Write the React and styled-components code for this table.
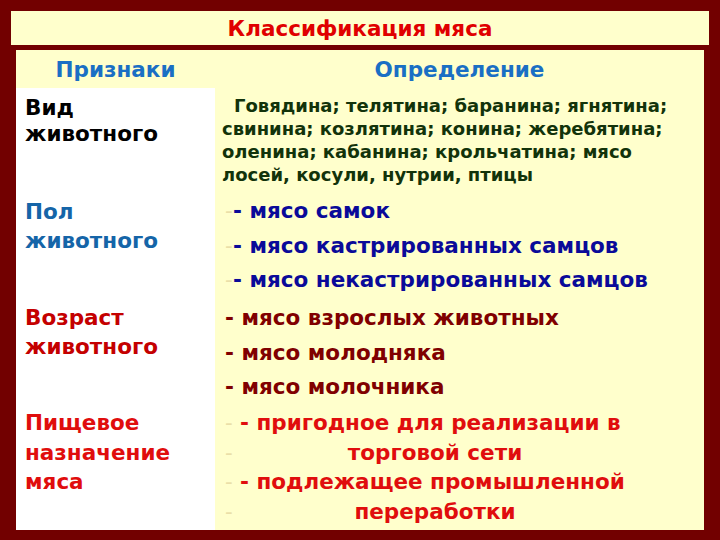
import React from "react";
import styled, { createGlobalStyle } from "styled-components";

const Global = createGlobalStyle`
  html, body { margin: 0; padding: 0; }
  body {
    width: 720px;
    height: 540px;
    overflow: hidden;
    background: #720000;
    font-family: "DejaVu Sans", Verdana, sans-serif;
    font-weight: bold;
  }
`;

const Page = styled.div`
  width: 720px;
  height: 540px;
  box-sizing: border-box;
  padding: 11px 11px 0 11px;
  display: flex;
  flex-direction: column;
  gap: 5px;
`;

const TitleBar = styled.div`
  height: 34px;
  background: #ffffcc;
  display: flex;
  align-items: center;
  justify-content: center;
  color: #e00000;
  font-size: 21.5px;
`;

const Table = styled.div`
  margin: 0 5px;
  display: grid;
  grid-template-columns: 199px 1fr;
  grid-template-rows: 38px 105px 107px 105px 125px;
`;

const HeadCell = styled.div`
  background: #ffffcc;
  color: #1a6fc4;
  font-size: 21.5px;
  display: flex;
  align-items: center;
  justify-content: center;
  padding-left: ${(p) => p.$shift || 0}px;
`;

const LeftCell = styled.div`
  background: #ffffff;
  color: ${(p) => p.$color};
  font-size: 21.5px;
  line-height: ${(p) => p.$lh}px;
  padding: ${(p) => p.$top}px 0 0 9px;
`;

const RightCell = styled.div`
  background: #ffffcc;
  color: ${(p) => p.$color};
  font-size: ${(p) => p.$size}px;
  line-height: ${(p) => p.$lh}px;
  padding: ${(p) => p.$top}px 0 0 ${(p) => p.$left || 10}px;
`;

const Para = styled.div`
  text-indent: 12px;
  padding-right: 14px;
`;

const Line = styled.div`
  display: flex;
  white-space: nowrap;
`;

const Faint = styled.span`
  color: #eadfa8;
  font-weight: normal;
  width: ${(p) => p.$w}px;
  flex: none;
`;

const LineText = styled.span`
  flex: none;
  width: ${(p) => (p.$center ? "390px" : "auto")};
  text-align: ${(p) => (p.$center ? "center" : "left")};
`;

export default function App() {
  return (
    <>
      <Global />
      <Page>
        <TitleBar>Классификация мяса</TitleBar>
        <Table>
          <HeadCell>Признаки</HeadCell>
          <HeadCell>Определение</HeadCell>

          <LeftCell $color="#000000" $lh={26} $top={7}>
            Вид
            <br />
            животного
          </LeftCell>
          <RightCell $color="#12330a" $size={18} $lh={23} $top={6} $left={7}>
            <Para>
              Говядина; телятина; баранина; ягнятина; свинина; козлятина;
              конина; жеребятина; оленина; кабанина; крольчатина; мясо лосей,
              косули, нутрии, птицы
            </Para>
          </RightCell>

          <LeftCell $color="#1565a8" $lh={29} $top={4}>
            Пол
            <br />
            животного
          </LeftCell>
          <RightCell $color="#0a0a99" $size={21.5} $lh={34.5} $top={1} $left={10}>
            <Line>
              <Faint $w={8}>-</Faint>
              <span>- мясо самок</span>
            </Line>
            <Line>
              <Faint $w={8}>-</Faint>
              <span>- мясо кастрированных самцов</span>
            </Line>
            <Line>
              <Faint $w={8}>-</Faint>
              <span>- мясо некастрированных самцов</span>
            </Line>
          </RightCell>

          <LeftCell $color="#c40000" $lh={29} $top={3}>
            Возраст
            <br />
            животного
          </LeftCell>
          <RightCell $color="#800000" $size={21.5} $lh={34.5} $top={1} $left={10}>
            <Line>- мясо взрослых животных</Line>
            <Line>- мясо молодняка</Line>
            <Line>- мясо молочника</Line>
          </RightCell>

          <LeftCell $color="#e00d0d" $lh={29.5} $top={3}>
            Пищевое
            <br />
            назначение
            <br />
            мяса
          </LeftCell>
          <RightCell $color="#e00d0d" $size={21.5} $lh={29.5} $top={3} $left={10}>
            <Line>
              <Faint $w={15}>-</Faint>
              <LineText>- пригодное для реализации в</LineText>
            </Line>
            <Line>
              <Faint $w={15}>-</Faint>
              <LineText $center>торговой сети</LineText>
            </Line>
            <Line>
              <Faint $w={15}>-</Faint>
              <LineText>- подлежащее промышленной</LineText>
            </Line>
            <Line>
              <Faint $w={15}>-</Faint>
              <LineText $center>переработки</LineText>
            </Line>
          </RightCell>
        </Table>
      </Page>
    </>
  );
}
